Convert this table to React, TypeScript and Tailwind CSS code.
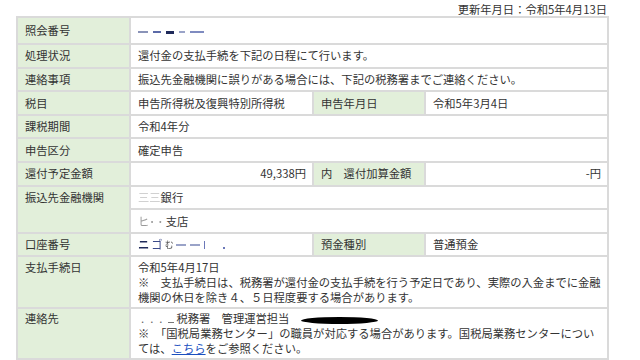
const th = "bg-[#e2efda] border-2 border-[#dadada] pl-[7px] pr-1 py-[3.3px] align-middle text-left font-normal";
const td = "bg-white border-2 border-[#dadada] pl-[7px] pr-[6px] py-[3.3px] align-middle";
const thTop = "bg-[#e2efda] border-2 border-[#dadada] pl-[7px] pr-1 pt-[2.5px] pb-[2px] align-top text-left font-normal";
const tdTop = "bg-white border-2 border-[#dadada] pl-[7px] pr-[6px] pt-[2.5px] pb-[2px] align-top";

function Smudge({ w, c, h = 2 }: { w: number; c: string; h?: number }) {
  return (
    <span
      className="inline-block align-middle mr-[2px] blur-[0.6px]"
      style={{ width: w, height: h, background: c }}
    />
  );
}

export default function App() {
  return (
    <div
      className="w-[640px] h-[360px] overflow-hidden bg-white text-[#333] text-[11.3px] leading-[15px]"
      style={{ fontFamily: '"Noto Sans CJK JP", "Noto Sans", sans-serif' }}
    >
      <div className="w-[593px] ml-4 pt-[2px] h-[16px] text-right pr-[2px]">
        更新年月日：令和5年4月13日
      </div>
      <table className="ml-4 w-[593px] border-collapse table-fixed">
        <colgroup>
          <col className="w-[113px]" />
          <col className="w-[183px]" />
          <col className="w-[112px]" />
          <col />
        </colgroup>
        <tbody>
          <tr>
            <th className={th}>照会番号</th>
            <td className={td} colSpan={3}>
              <span className="inline-flex items-center gap-[3px] h-[15px]">
                <Smudge w={10} c="#8a93b8" />
                <Smudge w={8} c="#5b6aa8" />
                <Smudge w={8} c="#1f2a5a" h={3} />
                <Smudge w={6} c="#9aa3c8" />
                <Smudge w={14} c="#7f8bc0" />
              </span>
            </td>
          </tr>
          <tr>
            <th className={th}>処理状況</th>
            <td className={td} colSpan={3}>還付金の支払手続を下記の日程にて行います。</td>
          </tr>
          <tr>
            <th className={th}>連絡事項</th>
            <td className={td} colSpan={3}>振込先金融機関に誤りがある場合には、下記の税務署までご連絡ください。</td>
          </tr>
          <tr>
            <th className={th}>税目</th>
            <td className={td}>申告所得税及復興特別所得税</td>
            <th className={th}>申告年月日</th>
            <td className={td}>令和5年3月4日</td>
          </tr>
          <tr>
            <th className={th}>課税期間</th>
            <td className={td} colSpan={3}>令和4年分</td>
          </tr>
          <tr>
            <th className={th}>申告区分</th>
            <td className={td} colSpan={3}>確定申告</td>
          </tr>
          <tr>
            <th className={th}>還付予定金額</th>
            <td className={td + " text-right"}>49,338円</td>
            <th className={th}>内　還付加算金額</th>
            <td className={td + " text-right"}>-円</td>
          </tr>
          <tr>
            <th className={th + " !align-top"} rowSpan={2}>振込先金融機関</th>
            <td className={td} colSpan={3}>
              <span className="text-[#c4c4c4] blur-[0.4px]">三三</span>銀行
            </td>
          </tr>
          <tr>
            <td className={td} colSpan={3}>
              <span className="text-[#9a9a9a] blur-[0.3px]">ヒ･  ･</span> 支店
            </td>
          </tr>
          <tr>
            <th className={th}>口座番号</th>
            <td className={td}>
              <span className="inline-flex items-center h-[15px] gap-[2px]">
                <span className="text-[#1f2a5a] font-bold blur-[0.3px]">ニ</span>
                <span className="text-[#3b4a8a] blur-[0.3px]">ゴ</span>
                <span className="text-[#555] text-[9px] blur-[0.3px]">む</span>
                <Smudge w={10} c="#9aa3c8" />
                <Smudge w={10} c="#9aa3c8" />
                <span className="inline-block w-[1px] h-[8px] bg-[#6b78b8] mr-[16px]" />
                <span className="inline-block w-[2px] h-[2px] bg-[#6b78b8] mt-[6px]" />
              </span>
            </td>
            <th className={th}>預金種別</th>
            <td className={td}>普通預金</td>
          </tr>
          <tr>
            <th className={thTop}>支払手続日</th>
            <td className={tdTop} colSpan={3}>
              令和5年4月17日
              <br />
              ※　支払手続日は、税務署が還付金の支払手続を行う予定日であり、実際の入金までに金融
              <br />
              機関の休日を除き４、５日程度要する場合があります。
            </td>
          </tr>
          <tr>
            <th className={thTop}>連絡先</th>
            <td className={tdTop} colSpan={3}>
              <span className="inline-flex items-end gap-[6px] pl-[3px] pr-[2px] text-[#666] align-baseline">
                <span>.</span>
                <span>.</span>
                <span>.</span>
                <span className="inline-block w-[6px] h-[1px] bg-[#777] mb-[3px]" />
              </span>
              税務署　管理運営担当
              <span className="inline-block align-middle ml-[12px] w-[77px] h-[7px] bg-black rounded-[50%]" />
              <br />
              ※　「国税局業務センター」の職員が対応する場合があります。国税局業務センターについ
              <br />
              ては、<span className="text-[#1a4fbf] underline">こちら</span>をご参照ください。
            </td>
          </tr>
        </tbody>
      </table>
    </div>
  );
}
